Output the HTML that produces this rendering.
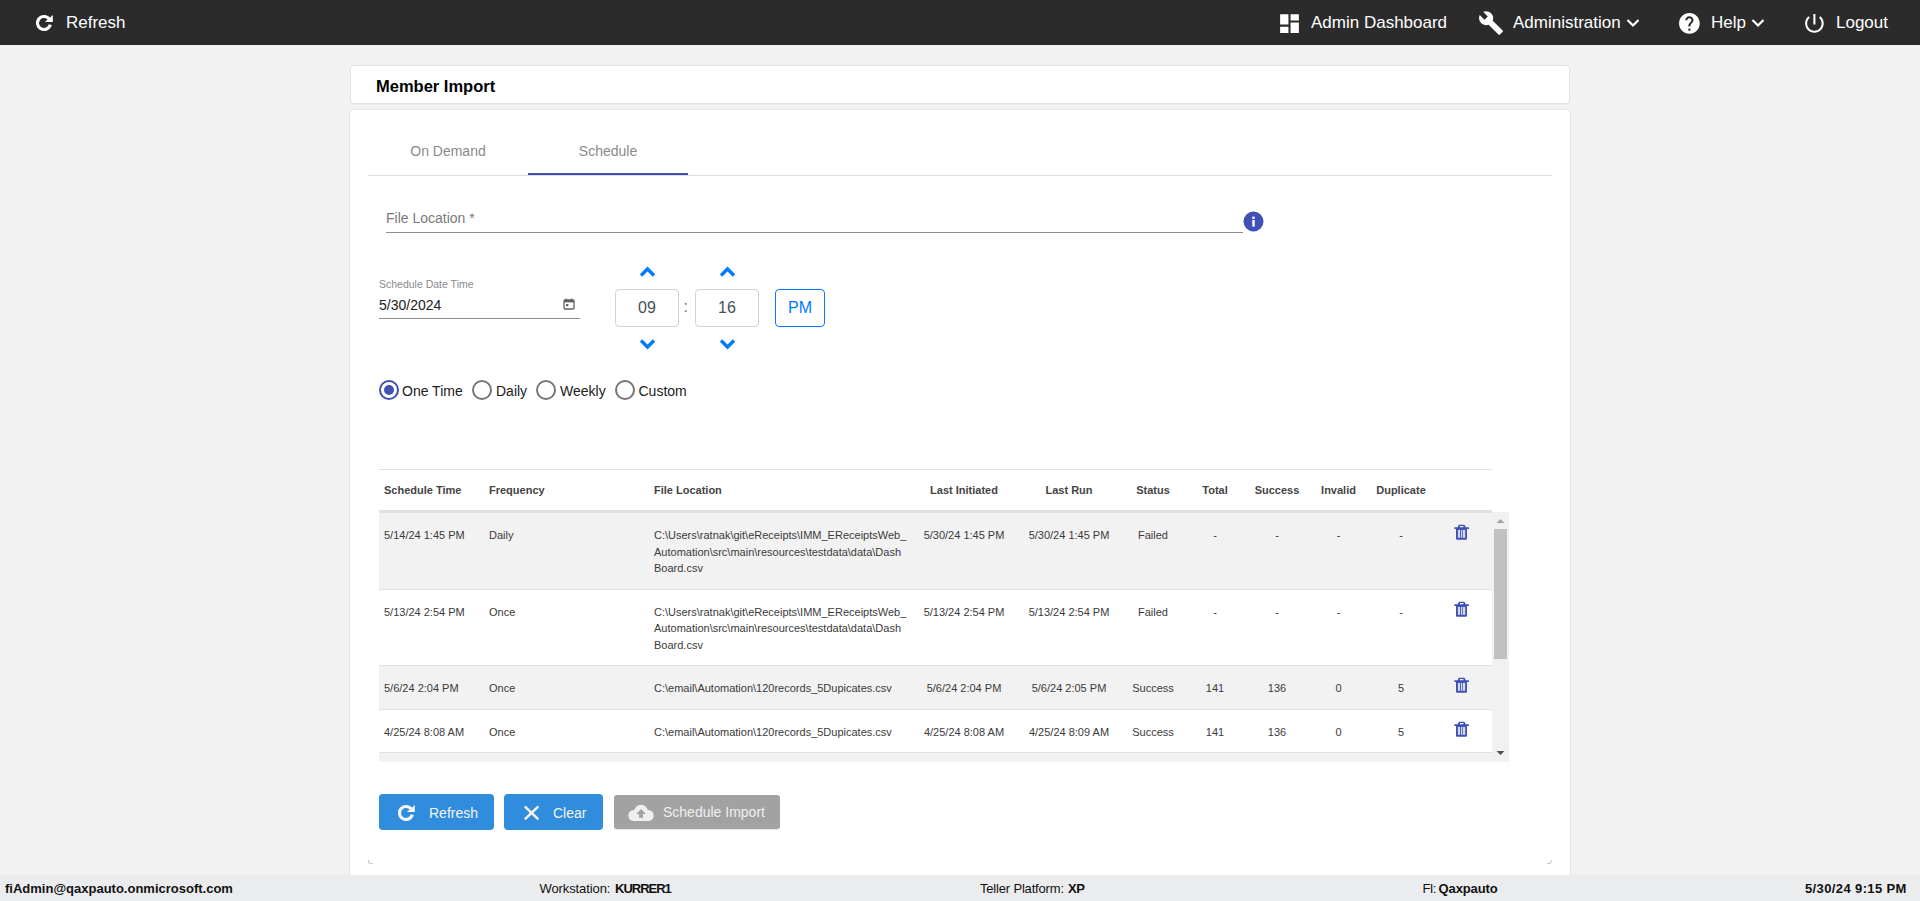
<!DOCTYPE html>
<html><head><meta charset="utf-8">
<style>
*{box-sizing:border-box;margin:0;padding:0}
html,body{width:1920px;height:901px;overflow:hidden;background:#f2f2f2;font-family:"Liberation Sans",sans-serif;position:relative}
.abs{position:absolute}
#hdr{left:0;top:0;width:1920px;height:45px;background:#2b2b2b;color:#fff}
#hdr .t{position:absolute;top:13px;font-size:17px;line-height:20px;white-space:nowrap}
#hdr svg{position:absolute}
.card{background:#fff;border-radius:4px}
#c1{left:350px;top:65px;width:1220px;height:39px;border:1px solid #e3e3e3;box-shadow:0 1px 1px rgba(0,0,0,.04)}
#c1 .ttl{position:absolute;left:25px;top:10px;font-size:16.5px;font-weight:bold;color:#000;line-height:20px;white-space:nowrap}
#c2{left:349px;top:109px;width:1222px;height:800px;border:1px solid #e6e6e6}
.tab{position:absolute;top:143px;font-size:14px;line-height:16px;color:#8a8a8a;width:160px;text-align:center}
.t11{font-size:11px;line-height:16px;white-space:nowrap;position:absolute;color:#333}
.ft{position:absolute;top:881px;font-size:13px;line-height:16px;color:#111;white-space:nowrap}
.hd{font-weight:bold;color:#333}
</style></head><body>
<div id="hdr" class="abs">
  <svg style="left:34.1px;top:12.8px" width="20" height="20" viewBox="0 0 20 20"><use href="#redo" fill="#fff" stroke="#fff"/></svg>
  <div class="t" style="left:66px">Refresh</div>
  <svg style="left:1277px;top:11px" width="25" height="25" viewBox="0 0 24 24"><path fill="#fff" d="M3 13h8V3H3v10zm0 8h8v-6H3v6zm10 0h8V11h-8v10zm0-18v6h8V3h-8z"/></svg>
  <div class="t" style="left:1311px">Admin Dashboard</div>
  <svg style="left:1478px;top:10px" width="26" height="26" viewBox="0 0 24 24"><path fill="#fff" d="M22.7 19l-9.1-9.1c.9-2.3.4-5-1.5-6.9-2-2-5-2.4-7.4-1.3L9 6 6 9 1.6 4.7C.4 7.1.9 10.1 2.9 12.1c1.9 1.9 4.6 2.4 6.9 1.5l9.1 9.1c.4.4 1 .4 1.4 0l2.3-2.3c.5-.4.5-1.1.1-1.4z"/></svg>
  <div class="t" style="left:1513px">Administration</div>
  <svg style="left:1626px;top:18px" width="14" height="10" viewBox="0 0 14 10"><path d="M1.5 2 L7 7.5 L12.5 2" stroke="#fff" stroke-width="2.2" fill="none"/></svg>
  <svg style="left:1676.5px;top:10.7px" width="24.8" height="24.8" viewBox="0 0 24 24"><path fill="#fff" d="M12 2C6.48 2 2 6.48 2 12s4.48 10 10 10 10-4.48 10-10S17.52 2 12 2zm1 17h-2v-2h2v2zm2.070-7.75l-.9.92C13.45 12.9 13 13.5 13 15h-2v-.5c0-1.1.45-2.100 1.17-2.83l1.24-1.26c.37-.36.59-.86.59-1.41 0-1.100-.9-2-2-2s-2 .9-2 2H8c0-2.21 1.79-4 4-4s4 1.79 4 4c0 .88-.36 1.68-.93 2.25z"/></svg>
  <div class="t" style="left:1711px">Help</div>
  <svg style="left:1751px;top:18px" width="14" height="10" viewBox="0 0 14 10"><path d="M1.5 2 L7 7.5 L12.5 2" stroke="#fff" stroke-width="2.2" fill="none"/></svg>
  <svg style="left:1801.6px;top:10.5px" width="24.8" height="24.8" viewBox="0 0 24 24"><path fill="#fff" d="M13 3h-2v10h2V3zm4.830 2.17l-1.42 1.42C17.99 7.86 19 9.81 19 12c0 3.87-3.13 7-7 7s-7-3.13-7-7c0-2.19 1.01-4.14 2.58-5.42L6.17 5.17C4.23 6.82 3 9.26 3 12c0 4.97 4.03 9 9 9s9-4.030 9-9c0-2.74-1.23-5.18-3.17-6.83z"/></svg>
  <div class="t" style="left:1836px">Logout</div>
</div>

<div id="c1" class="abs card"><div class="ttl">Member Import</div></div>
<div id="c2" class="abs card"></div>

<!-- tabs -->
<div class="tab" style="left:368px">On Demand</div>
<div class="tab" style="left:528px">Schedule</div>
<div class="abs" style="left:368px;top:175px;width:1184px;height:1px;background:#dcdcdc"></div>
<div class="abs" style="left:528px;top:173px;width:160px;height:2px;background:#3f51b5"></div>

<!-- file location -->
<div class="abs" style="left:386px;top:210px;font-size:14px;line-height:16px;color:#7a7a7a;white-space:nowrap">File Location *</div>
<div class="abs" style="left:386px;top:232px;width:857px;height:1px;background:#8c8c8c"></div>
<svg class="abs" style="left:1243px;top:210.5px" width="21" height="21" viewBox="0 0 21 21"><circle cx="10.5" cy="10.5" r="10" fill="#3f51b5"/><rect x="9.3" y="9" width="2.4" height="6.6" fill="#fff"/><rect x="9.3" y="5.6" width="2.4" height="2.3" fill="#fff"/></svg>

<!-- date -->
<div class="abs" style="left:379px;top:278px;font-size:10.5px;line-height:12px;color:#8a8a8a;white-space:nowrap">Schedule Date Time</div>
<div class="abs" style="left:379px;top:297px;font-size:14px;line-height:16px;color:#212121;white-space:nowrap">5/30/2024</div>
<div class="abs" style="left:379px;top:318px;width:201px;height:1px;background:#8c8c8c"></div>
<svg class="abs" style="left:563px;top:298px" width="12" height="12" viewBox="0 0 12 12"><rect x="1" y="2" width="10" height="9" rx="1" fill="none" stroke="#616161" stroke-width="1.3"/><rect x="1" y="2" width="10" height="2.4" fill="#616161"/><rect x="2.6" y="0.6" width="1.2" height="2" fill="#616161"/><rect x="8.2" y="0.6" width="1.2" height="2" fill="#616161"/><rect x="3" y="6" width="2.4" height="2.2" fill="#616161"/></svg>

<!-- timepicker -->
<svg class="abs" style="left:639px;top:265.5px" width="17" height="12" viewBox="0 0 17 12"><path d="M2 9.5 L8.5 3 L15 9.5" stroke="#007bff" stroke-width="3.4" fill="none"/></svg>
<svg class="abs" style="left:719px;top:265.5px" width="17" height="12" viewBox="0 0 17 12"><path d="M2 9.5 L8.5 3 L15 9.5" stroke="#007bff" stroke-width="3.4" fill="none"/></svg>
<svg class="abs" style="left:639px;top:338px" width="17" height="12" viewBox="0 0 17 12"><path d="M2 2.5 L8.5 9 L15 2.5" stroke="#007bff" stroke-width="3.4" fill="none"/></svg>
<svg class="abs" style="left:719px;top:338px" width="17" height="12" viewBox="0 0 17 12"><path d="M2 2.5 L8.5 9 L15 2.5" stroke="#007bff" stroke-width="3.4" fill="none"/></svg>
<div class="abs" style="left:615px;top:289px;width:64px;height:38px;border:1px solid #ced4da;border-radius:4px;font-size:16px;line-height:36px;text-align:center;color:#495057">09</div>
<div class="abs" style="left:683.5px;top:298px;font-size:16px;line-height:18px;color:#777">:</div>
<div class="abs" style="left:695px;top:289px;width:64px;height:38px;border:1px solid #ced4da;border-radius:4px;font-size:16px;line-height:36px;text-align:center;color:#495057">16</div>
<div class="abs" style="left:775px;top:289px;width:50px;height:38px;border:1px solid #007bff;border-radius:4px;font-size:16px;line-height:36px;text-align:center;color:#007bff">PM</div>

<!-- radios -->
<svg class="abs" style="left:378px;top:379px" width="22" height="22" viewBox="0 0 22 22"><circle cx="11" cy="11" r="9" fill="none" stroke="#3f51b5" stroke-width="2"/><circle cx="11" cy="11" r="5" fill="#3f51b5"/></svg>
<div class="abs" style="left:402px;top:383px;font-size:14px;line-height:16px;color:#212121;white-space:nowrap">One Time</div>
<svg class="abs" style="left:471px;top:379px" width="22" height="22" viewBox="0 0 22 22"><circle cx="11" cy="11" r="9" fill="none" stroke="#757575" stroke-width="2"/></svg>
<div class="abs" style="left:496px;top:383px;font-size:14px;line-height:16px;color:#212121;white-space:nowrap">Daily</div>
<svg class="abs" style="left:535px;top:379px" width="22" height="22" viewBox="0 0 22 22"><circle cx="11" cy="11" r="9" fill="none" stroke="#757575" stroke-width="2"/></svg>
<div class="abs" style="left:560px;top:383px;font-size:14px;line-height:16px;color:#212121;white-space:nowrap">Weekly</div>
<svg class="abs" style="left:614px;top:379px" width="22" height="22" viewBox="0 0 22 22"><circle cx="11" cy="11" r="9" fill="none" stroke="#757575" stroke-width="2"/></svg>
<div class="abs" style="left:638.5px;top:383px;font-size:14px;line-height:16px;color:#212121;white-space:nowrap">Custom</div>

<svg width="0" height="0" style="position:absolute"><defs><symbol id="redo" viewBox="0 0 20 20"><path d="M15.63 6.75 A6.5 6.5 0 1 0 16.3 11.6" fill="none" stroke-width="3.1"/><path d="M18.8 2 V9 H10.9 Z" stroke="none"/></symbol><symbol id="trash" viewBox="0 0 24 24">
<path fill="#3f51b5" fill-rule="evenodd" d="M9.2 4.8h4.8c.5 0 .8.3 1 .7l.7 1.7H18.9v1.8H4.4V7.2h3.4l.6-1.7c.2-.4.4-.7.8-.7zM9.9 6v1.2h3.5V6z"/>
<path fill="#3f51b5" d="M6 8.9h11v9.6c0 .7-.6 1.3-1.3 1.3H7.3c-.7 0-1.3-.6-1.3-1.3z"/>
<rect x="7.9" y="9.9" width="2.1" height="7.9" fill="#d5d8ea"/><rect x="10.9" y="9.9" width="1.4" height="7.9" fill="#d5d8ea"/><rect x="13" y="9.9" width="2.2" height="7.9" fill="#d5d8ea"/>
</symbol></defs></svg>

<!-- table -->
<div class="abs" style="left:379px;top:469px;width:1113px;height:1px;background:#dee2e6"></div>
<div class="t11" style="left:384px;top:482px;color:#444;font-weight:bold">Schedule Time</div>
<div class="t11" style="left:489px;top:482px;color:#444;font-weight:bold">Frequency</div>
<div class="t11" style="left:654px;top:482px;color:#444;font-weight:bold">File Location</div>
<div class="t11" style="left:904px;top:482px;width:120px;text-align:center;color:#444;font-weight:bold">Last Initiated</div>
<div class="t11" style="left:1009px;top:482px;width:120px;text-align:center;color:#444;font-weight:bold">Last Run</div>
<div class="t11" style="left:1093px;top:482px;width:120px;text-align:center;color:#444;font-weight:bold">Status</div>
<div class="t11" style="left:1155px;top:482px;width:120px;text-align:center;color:#444;font-weight:bold">Total</div>
<div class="t11" style="left:1217px;top:482px;width:120px;text-align:center;color:#444;font-weight:bold">Success</div>
<div class="t11" style="left:1278.5px;top:482px;width:120px;text-align:center;color:#444;font-weight:bold">Invalid</div>
<div class="t11" style="left:1341px;top:482px;width:120px;text-align:center;color:#444;font-weight:bold">Duplicate</div>
<div class="abs" style="left:379px;top:510px;width:1113px;height:3px;background:#dee2e6"></div>
<div class="abs" style="left:379px;top:513px;width:1113px;height:249px;overflow:hidden">
<div class="abs" style="left:0;top:0px;width:1113px;height:76px;background:#f2f2f2"></div>
<div class="abs" style="left:0;top:76px;width:1113px;height:1px;background:#dee2e6"></div>
<div class="t11" style="left:5px;top:14px;color:#3a3a3a">5/14/24 1:45 PM</div>
<div class="t11" style="left:110px;top:14px;color:#3a3a3a">Daily</div>
<div class="t11" style="left:275px;top:14.0px;color:#3a3a3a">C:\Users\ratnak\git\eReceipts\IMM_EReceiptsWeb_</div>
<div class="t11" style="left:275px;top:30.5px;color:#3a3a3a">Automation\src\main\resources\testdata\data\Dash</div>
<div class="t11" style="left:275px;top:47.0px;color:#3a3a3a">Board.csv</div>
<div class="t11" style="left:525px;top:14px;width:120px;text-align:center;color:#3a3a3a">5/30/24 1:45 PM</div>
<div class="t11" style="left:630px;top:14px;width:120px;text-align:center;color:#3a3a3a">5/30/24 1:45 PM</div>
<div class="t11" style="left:714px;top:14px;width:120px;text-align:center;color:#3a3a3a">Failed</div>
<div class="t11" style="left:776px;top:14px;width:120px;text-align:center;color:#3a3a3a">-</div>
<div class="t11" style="left:838px;top:14px;width:120px;text-align:center;color:#3a3a3a">-</div>
<div class="t11" style="left:899.5px;top:14px;width:120px;text-align:center;color:#3a3a3a">-</div>
<div class="t11" style="left:962px;top:14px;width:120px;text-align:center;color:#3a3a3a">-</div>
<svg class="abs" style="left:1071px;top:7px" width="24" height="24" viewBox="0 0 24 24"><use href="#trash"/></svg>
<div class="abs" style="left:0;top:77px;width:1113px;height:75px;background:#ffffff"></div>
<div class="abs" style="left:0;top:152px;width:1113px;height:1px;background:#dee2e6"></div>
<div class="t11" style="left:5px;top:90.5px;color:#3a3a3a">5/13/24 2:54 PM</div>
<div class="t11" style="left:110px;top:90.5px;color:#3a3a3a">Once</div>
<div class="t11" style="left:275px;top:90.5px;color:#3a3a3a">C:\Users\ratnak\git\eReceipts\IMM_EReceiptsWeb_</div>
<div class="t11" style="left:275px;top:107.0px;color:#3a3a3a">Automation\src\main\resources\testdata\data\Dash</div>
<div class="t11" style="left:275px;top:123.5px;color:#3a3a3a">Board.csv</div>
<div class="t11" style="left:525px;top:90.5px;width:120px;text-align:center;color:#3a3a3a">5/13/24 2:54 PM</div>
<div class="t11" style="left:630px;top:90.5px;width:120px;text-align:center;color:#3a3a3a">5/13/24 2:54 PM</div>
<div class="t11" style="left:714px;top:90.5px;width:120px;text-align:center;color:#3a3a3a">Failed</div>
<div class="t11" style="left:776px;top:90.5px;width:120px;text-align:center;color:#3a3a3a">-</div>
<div class="t11" style="left:838px;top:90.5px;width:120px;text-align:center;color:#3a3a3a">-</div>
<div class="t11" style="left:899.5px;top:90.5px;width:120px;text-align:center;color:#3a3a3a">-</div>
<div class="t11" style="left:962px;top:90.5px;width:120px;text-align:center;color:#3a3a3a">-</div>
<svg class="abs" style="left:1071px;top:84px" width="24" height="24" viewBox="0 0 24 24"><use href="#trash"/></svg>
<div class="abs" style="left:0;top:153px;width:1113px;height:43px;background:#f2f2f2"></div>
<div class="abs" style="left:0;top:196px;width:1113px;height:1px;background:#dee2e6"></div>
<div class="t11" style="left:5px;top:167px;color:#3a3a3a">5/6/24 2:04 PM</div>
<div class="t11" style="left:110px;top:167px;color:#3a3a3a">Once</div>
<div class="t11" style="left:275px;top:167.0px;color:#3a3a3a">C:\email\Automation\120records_5Dupicates.csv</div>
<div class="t11" style="left:525px;top:167px;width:120px;text-align:center;color:#3a3a3a">5/6/24 2:04 PM</div>
<div class="t11" style="left:630px;top:167px;width:120px;text-align:center;color:#3a3a3a">5/6/24 2:05 PM</div>
<div class="t11" style="left:714px;top:167px;width:120px;text-align:center;color:#3a3a3a">Success</div>
<div class="t11" style="left:776px;top:167px;width:120px;text-align:center;color:#3a3a3a">141</div>
<div class="t11" style="left:838px;top:167px;width:120px;text-align:center;color:#3a3a3a">136</div>
<div class="t11" style="left:899.5px;top:167px;width:120px;text-align:center;color:#3a3a3a">0</div>
<div class="t11" style="left:962px;top:167px;width:120px;text-align:center;color:#3a3a3a">5</div>
<svg class="abs" style="left:1071px;top:160px" width="24" height="24" viewBox="0 0 24 24"><use href="#trash"/></svg>
<div class="abs" style="left:0;top:197px;width:1113px;height:42px;background:#ffffff"></div>
<div class="abs" style="left:0;top:239px;width:1113px;height:1px;background:#dee2e6"></div>
<div class="t11" style="left:5px;top:210.5px;color:#3a3a3a">4/25/24 8:08 AM</div>
<div class="t11" style="left:110px;top:210.5px;color:#3a3a3a">Once</div>
<div class="t11" style="left:275px;top:210.5px;color:#3a3a3a">C:\email\Automation\120records_5Dupicates.csv</div>
<div class="t11" style="left:525px;top:210.5px;width:120px;text-align:center;color:#3a3a3a">4/25/24 8:08 AM</div>
<div class="t11" style="left:630px;top:210.5px;width:120px;text-align:center;color:#3a3a3a">4/25/24 8:09 AM</div>
<div class="t11" style="left:714px;top:210.5px;width:120px;text-align:center;color:#3a3a3a">Success</div>
<div class="t11" style="left:776px;top:210.5px;width:120px;text-align:center;color:#3a3a3a">141</div>
<div class="t11" style="left:838px;top:210.5px;width:120px;text-align:center;color:#3a3a3a">136</div>
<div class="t11" style="left:899.5px;top:210.5px;width:120px;text-align:center;color:#3a3a3a">0</div>
<div class="t11" style="left:962px;top:210.5px;width:120px;text-align:center;color:#3a3a3a">5</div>
<svg class="abs" style="left:1071px;top:204px" width="24" height="24" viewBox="0 0 24 24"><use href="#trash"/></svg>
<div class="abs" style="left:0;top:240px;width:1113px;height:40px;background:#f2f2f2"></div>
<div class="abs" style="left:0;top:280px;width:1113px;height:1px;background:#dee2e6"></div>
</div>
<div class="abs" style="left:1492px;top:512px;width:17px;height:250px;background:#f1f1f1"></div>
<svg class="abs" style="left:1492px;top:512px" width="17" height="250" viewBox="0 0 17 250"><path d="M4.5 11 L8.5 7 L12.5 11 Z" fill="#a3a3a3"/><rect x="2" y="17" width="13" height="130" fill="#c1c1c1"/><path d="M4.5 239 L8.5 243 L12.5 239 Z" fill="#505050"/></svg>
<!-- buttons -->
<div class="abs" style="left:379px;top:794px;width:115px;height:36px;background:#308cdc;border-radius:4px"></div>
<svg class="abs" style="left:396.4px;top:802.9px" width="20" height="20" viewBox="0 0 20 20"><use href="#redo" fill="#f4f4f4" stroke="#f4f4f4"/></svg>
<div class="abs" style="left:429px;top:805px;font-size:14px;line-height:16px;color:#f4f4f4;white-space:nowrap">Refresh</div>
<div class="abs" style="left:504px;top:794px;width:99px;height:36px;background:#308cdc;border-radius:4px"></div>
<svg class="abs" style="left:518px;top:800px" width="28" height="26" viewBox="0 0 28 26"><path d="M7.5 7.2 L19.6 18.7 M19.6 7.2 L7.5 18.7" stroke="#f4f4f4" stroke-width="2.5" stroke-linecap="round"/></svg>
<div class="abs" style="left:553px;top:805px;font-size:14px;line-height:16px;color:#f4f4f4;white-space:nowrap">Clear</div>
<div class="abs" style="left:614px;top:795px;width:166px;height:34px;background:#a2a2a2;border-radius:3px;box-shadow:0 1px 1px rgba(0,0,0,.1)"></div>
<svg class="abs" style="left:620px;top:798px" width="40" height="28" viewBox="620 798 40 28"><g fill="#efefef"><circle cx="633.8" cy="815.5" r="5.5"/><circle cx="641" cy="811.6" r="6.9"/><circle cx="648.2" cy="815.5" r="5.5"/><rect x="633.8" y="811" width="14.4" height="10"/></g><path fill="#a2a2a2" d="M641.1 809 L646 813.9 H643 V817.7 H639 V813.9 H636.2 Z"/></svg>
<div class="abs" style="left:663px;top:804px;font-size:14px;line-height:16px;color:#efefef;white-space:nowrap">Schedule Import</div>

<svg class="abs" style="left:366px;top:858px" width="10" height="8" viewBox="0 0 10 8"><path d="M2.6 2 V4 Q2.6 5.6 4.6 5.6 H6.5" stroke="#bdbdbd" stroke-width="1" fill="none"/></svg>
<svg class="abs" style="left:1545px;top:858px" width="10" height="8" viewBox="0 0 10 8"><path d="M6 2 V4 Q6 5.6 4 5.6 H2" stroke="#bdbdbd" stroke-width="1" fill="none"/></svg>
<!-- footer -->
<div class="abs" style="left:0;top:875px;width:1920px;height:26px;background:#ebecee"></div>
<div class="ft" style="left:5px"><b>fiAdmin@qaxpauto.onmicrosoft.com</b></div>
<div class="ft" style="left:539.5px;letter-spacing:-0.1px">Workstation:</div>
<div class="ft" style="left:615px;letter-spacing:-1px"><b>KURRER1</b></div>
<div class="ft" style="left:980px;letter-spacing:-0.18px">Teller Platform:</div>
<div class="ft" style="left:1068px;letter-spacing:-0.3px"><b>XP</b></div>
<div class="ft" style="left:1422.5px;letter-spacing:-0.6px">FI:</div>
<div class="ft" style="left:1438.5px;letter-spacing:-0.1px"><b>Qaxpauto</b></div>
<div class="ft" style="left:1805px;letter-spacing:0.38px"><b>5/30/24 9:15 PM</b></div>
</body></html>
